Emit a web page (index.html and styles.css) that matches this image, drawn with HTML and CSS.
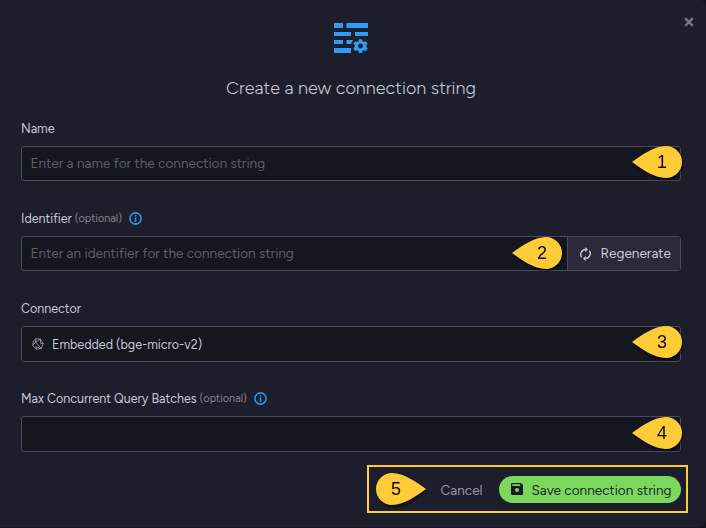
FILE: index.html
```
<!DOCTYPE html>
<html lang="en">
<head>
<meta charset="utf-8">
<title>Create a new connection string</title>
<link rel="stylesheet" href="styles.css">
</head>
<body>
<svg class="defs" aria-hidden="true">
  <symbol id="pin" viewBox="0 0 50 32"><path d="M0 16C10 9 22 0 34 0a16 16 0 0 1 0 32C22 32 10 23 0 16Z" fill="#ffcb36"/></symbol>
  <symbol id="info" viewBox="0 0 13 13"><circle cx="6.5" cy="6.5" r="5.6" fill="none" stroke="#2497f3" stroke-width="1.6"/><path d="M5.7 3.200h1.600v1.400H5.700zM5.700 5.600h1.600v4.200H5.700z" fill="#2497f3"/></symbol>
</svg>
<main class="modal">
  <button class="close" aria-label="Close"><svg width="10" height="10" viewBox="0 0 10 10"><path d="M1.2 1.2 8.8 8.8M8.8 1.2 1.2 8.8" stroke="#73747e" stroke-width="2.5"/></svg></button>
  <header class="head">
    <svg class="logo" width="35" height="31" viewBox="0 0 35 31" fill="#309cf4">
      <path d="M0 0h9v5H0zM12.500 0H34v5H12.500zM0 9h17v4H0zM21 9h13v4H21zM0 17h9v4H0zM12.500 17h6.500l-2 4h-4.500zM0 25h17v5H0z"/>
      <path fill-rule="evenodd" d="m25 16.200h3l.5 2 1.500.8 2-.8 1.700 2.600-1.400 1.500v1.500l1.400 1.500-1.700 2.600-2-.7-1.500.8-.5 2h-3l-.5-2-1.500-.8-2 .7-1.600-2.600 1.400-1.500v-1.500l-1.400-1.500 1.600-2.600 2 .8 1.500-.8zM26.500 20.600a2.400 2.400 0 1 0 0 4.800 2.400 2.400 0 0 0 0-4.800Z"/>
    </svg>
    <h1 class="title">Create a new connection string</h1>
  </header>
  <section class="field">
    <label class="label"><span>Name</span></label>
    <div class="control"><span class="placeholder">Enter a name for the connection string</span><span class="pin"><svg><use href="#pin"/></svg><b>1</b></span></div>
  </section>
  <section class="field">
    <label class="label"><span>Identifier</span><small>(optional)</small><svg class="info"><use href="#info"/></svg></label>
    <div class="control"><span class="placeholder">Enter an identifier for the connection string</span>
      <button class="regenerate"><svg width="13" height="14" viewBox="0 0 13 14" fill="none" stroke="#c6c5d8" stroke-width="1.400"><path d="M2.600 10.300A5 5 0 0 1 6.800 2.500M10.400 3.700A5 5 0 0 1 6.200 11.500"/><path d="M6.300 0v5l2.700-2.500zM6.700 9v5L4 11.500z" fill="#c6c5d8" stroke="none"/></svg><span>Regenerate</span></button>
      <span class="pin pin-inner"><svg><use href="#pin"/></svg><b>2</b></span></div>
  </section>
  <section class="field">
    <label class="label"><span>Connector</span></label>
    <div class="control tall"><svg class="model" width="12" height="12" viewBox="0 0 12 12" fill="none" stroke="#a9a8b5" stroke-width=".75"><path d="M4 .7 8.500 1.100 11.300 5.500 9.200 10.500 4.500 11.300.8 7.500 1.300 3zM4 .7 3.500 4 .8 7.500M3.500 4l5.700 6.500M3.500 4 8.500 1.100 8.700 5.500M8.700 5.500h2.600M3.700 8.700l5.500 1.800M3.700 8.700l.8 2.600"/></svg><span class="value">Embedded (bge-micro-v2)</span><span class="pin"><svg><use href="#pin"/></svg><b>3</b></span></div>
  </section>
  <section class="field">
    <label class="label"><span>Max Concurrent Query Batches</span><small>(optional)</small><svg class="info"><use href="#info"/></svg></label>
    <div class="control tall"><span class="pin pin-low"><svg><use href="#pin"/></svg><b>4</b></span></div>
  </section>
  <footer class="actions">
    <span class="pin pin-flip"><svg><use href="#pin"/></svg><b>5</b></span>
    <button class="cancel"><span>Cancel</span></button>
    <button class="save"><svg width="12" height="12" viewBox="0 0 12 12"><path fill="#191a28" fill-rule="evenodd" d="M1 0h9l2 2v9a1 1 0 0 1-1 1H1a1 1 0 0 1-1-1V1a1 1 0 0 1 1-1Zm.2 1.200v1.900h8V1.200zM6 5a2 2 0 1 0 0 4 2 2 0 0 0 0-4Z"/></svg><span>Save connection string</span></button>
  </footer>
</main>
</body>
</html>
```

FILE: styles.css
```
* { box-sizing: border-box; }
body { margin: 0; background: #141521; font-family: Figtree, Lato, "Liberation Sans", sans-serif; color: #c8c7d8; }
button { font: inherit; border: 0; padding: 0; background: none; color: inherit; }
svg { display: block; flex: none; }
.defs { position: absolute; width: 0; height: 0; }
.modal { position: relative; width: 706px; height: 527px; padding: 0 25px 0 21px; background: #1d1e2b; border-radius: 0 6px 8px 0; overflow: hidden; }
.close { position: absolute; right: 12px; top: 17px; }
.head { height: 119px; padding-top: 23px; display: flex; flex-direction: column; align-items: center; }
.title { margin: 22px 0 0; font-size: 18px; line-height: 24px; font-weight: 300; white-space: nowrap; }
.field { height: 90px; }
.label { display: flex; align-items: center; height: 20px; margin-bottom: 7px; font-size: 12.5px; line-height: 18px; white-space: nowrap; }
.label > span { padding-bottom: 1px; }
.label small { margin-left: 3px; font-size: 10.9px; color: #83828f; }
.info { width: 13px; height: 13px; margin: -2px 0 0 7px; }
.control { position: relative; display: flex; align-items: center; width: 660px; height: 35px; padding-left: 8.5px; border: 1px solid #4a495e; border-radius: 3px; background: #141620; font-size: 13.6px; white-space: nowrap; }
.tall { height: 36px; }
.placeholder { padding-bottom: 2px; color: #5d5d68; }
.model { margin: 0 8px 0 1.5px; }
.value { font-size: 12.5px; }
.regenerate { display: flex; align-items: center; gap: 8px; width: 113px; height: 33px; margin-left: auto; padding-left: 11px; border-left: 1px solid #4a495e; border-radius: 0 2px 2px 0; background: #2a2a3b; }
.regenerate span { padding: 0 0 2px .5px; }
.pin { position: absolute; right: -2px; top: -1px; width: 50px; height: 32px; filter: drop-shadow(1px 2px 1px #0008); }
.pin svg { width: 50px; height: 32px; }
.pin b { position: absolute; inset: 0 4px 0 14px; text-align: center; font: 18px/32px "Liberation Sans", sans-serif; color: #080808; }
.pin-inner { right: 118px; top: 0; }
.pin-low { top: 0; }
.actions { display: flex; align-items: center; width: 321px; height: 48px; margin: -14px 0 0 346px; padding-left: 7px; border: 2px solid #ffcb36; font-size: 13.6px; white-space: nowrap; }
.pin-flip { position: relative; right: 0; top: 0; flex: none; }
.pin-flip svg { transform: scaleX(-1); }
.pin-flip b { inset: 0 10px 0 0; }
.cancel { width: 42px; margin: 2px 16.500px 0 14.500px; color: #9795ab; text-align: left; }
.save { display: flex; align-items: center; width: 182px; height: 27px; padding-left: 12px; gap: 8.500px; border-radius: 14px; background: #7bd85c; color: #1c2a2b; flex: none; }
.save span { padding-top: 1px; }
```
